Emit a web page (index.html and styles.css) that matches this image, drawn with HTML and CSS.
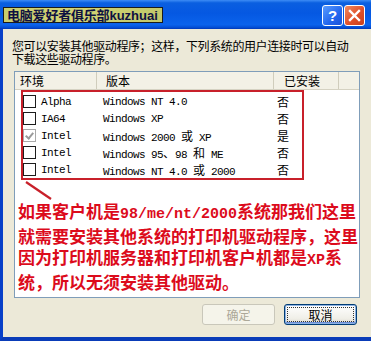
FILE: index.html
```html
<!DOCTYPE html>
<html lang="zh-CN">
<head>
    <meta charset="UTF-8">
    <title>其他驱动程序</title>
    <link rel="stylesheet" href="styles.css">
</head>
<body>
    <div class="window">
        <div class="titlebar">
            <div class="caption">电脑爱好者俱乐部<span class="latin">kuzhuai</span></div>
            <div class="tbtns">
                <div class="tbtn help">?</div>
                <div class="tbtn close">
                    <svg width="13" height="13" viewBox="0 0 13 13"><path d="M2 2 L11 11 M11 2 L2 11" stroke="#fff" stroke-width="2.4" stroke-linecap="square"/></svg>
                </div>
            </div>
        </div>

        <div class="frame">
            <p class="intro">您可以安装其他驱动程序；这样，下列系统的用户连接时可以自动<br>下载这些驱动程序。</p>

            <div class="listbox">
                <div class="head">
                    <div class="hcol c1">环境</div>
                    <div class="hcol c2">版本</div>
                    <div class="hcol c3">已安装</div>
                    <div class="hcol"></div>
                </div>
                <div class="rows">
                    <div class="row"><span class="check"></span><span>Alpha</span><span>Windows NT 4.0</span><span class="cj">否</span></div>
                    <div class="row"><span class="check"></span><span>IA64</span><span>Windows XP</span><span class="cj">否</span></div>
                    <div class="row"><span class="check on"></span><span>Intel</span><span>Windows 2000 <span class="cj">或</span> XP</span><span class="cj">是</span></div>
                    <div class="row"><span class="check"></span><span>Intel</span><span>Windows 95<span class="cj">、</span>98 <span class="cj">和</span> ME</span><span class="cj">否</span></div>
                    <div class="row"><span class="check"></span><span>Intel</span><span>Windows NT 4.0 <span class="cj">或</span> 2000</span><span class="cj">否</span></div>
                </div>
                <div class="note">如果客户机是<span class="mono">98/me/nt/2000</span>系统那我们这里<br>就需要安装其他系统的打印机驱动程序，这里<br>因为打印机服务器和打印机客户机都是<span class="mono">XP</span>系<br>统，所以无须安装其他驱动。</div>

                <div class="mark"></div>
                <svg class="arrow" width="30" height="20" viewBox="0 0 30 20"><path d="M2 1 L27 18" stroke="#c8202a" stroke-width="2.2"/></svg>
            </div>

            <div class="buttons">
                <button class="btn" disabled>确定</button>
                <button class="btn default"><span>取消</span></button>
            </div>
        </div>
    </div>
</body>
</html>
```

FILE: styles.css
```css
* {
    box-sizing: border-box;
}

body {
    margin: 0;
    width: 371px;
    height: 341px;
    overflow: hidden;
    font-family: "Noto Sans CJK SC", "Liberation Sans", sans-serif;
    font-size: 12px;
    color: #000;
    background: #0a3fc4;
}

.window {
    height: 341px;
    display: flex;
    flex-direction: column;
}

.titlebar {
    height: 29px;
    flex: none;
    display: flex;
    align-items: flex-start;
    justify-content: space-between;
    padding: 7px 6px 0 3px;
    background: linear-gradient(to bottom, #3d8cf5 0%, #0a5fe0 10%, #0558e2 45%, #0b63ec 85%, #0450d6 94%, #0038b8 100%);
}

.caption {
    height: 16px;
    padding: 0 4px 0 3px;
    border: 1px solid #1b1b1b;
    background: linear-gradient(to right, #c9cd6c, #d3d476 40%, #c2c86a);
    color: #0e1040;
    font-weight: bold;
    font-size: 13px;
    line-height: 14px;
    letter-spacing: -0.2px;
}

.caption .latin {
    font-family: "Liberation Sans", sans-serif;
    letter-spacing: 0;
}

.tbtns {
    display: flex;
    gap: 1px;
    margin-top: -2px;
}

.tbtn {
    width: 21px;
    height: 21px;
    border: 1px solid #fff;
    border-radius: 3px;
    display: flex;
    align-items: center;
    justify-content: center;
    color: #fff;
    font-family: "Liberation Sans", sans-serif;
    font-weight: bold;
    font-size: 15px;
}

.help {
    background: linear-gradient(135deg, #5a9cff, #2266ee 60%, #1a52d8);
}

.close {
    background: linear-gradient(135deg, #f08a60, #e0502a 55%, #c8401c);
}

.frame {
    flex: 1;
    background: #ece9d8;
    border-left: 3px solid #0840c8;
    border-bottom: 4px solid #0a3cb8;
    padding: 10px 14px 0 9px;
}

.intro {
    margin: 0 0 6px;
    line-height: 13px;
    letter-spacing: -0.4px;
}

.listbox {
    position: relative;
    margin-left: 2px;
    width: 346px;
    height: 227px;
    background: #fff;
    border: 1px solid #7f9db9;
}

.head {
    display: grid;
    grid-template-columns: 82px 177px 65px 1fr;
    height: 18px;
    background: #f3f1e6;
    border-bottom: 1px solid #d5d2c2;
}

.hcol {
    line-height: 17px;
    border-right: 1px solid #d0cdbc;
}

.hcol:last-child {
    border-right: 0;
}

.c1 { padding-left: 5px; }
.c2 { padding-left: 9px; }
.c3 { padding-left: 10px; }

.rows {
    padding-top: 3px;
}

.row {
    display: grid;
    grid-template-columns: 13px 62px 179px 1fr;
    align-items: center;
    height: 17px;
    padding-left: 8px;
    font-family: "Liberation Mono", monospace;
    font-size: 11px;
    letter-spacing: -0.6px;
}

.row > span:nth-child(2),
.row > span:nth-child(3) {
    margin-left: 5px;
}

.cj {
    font-family: "Noto Sans CJK SC", sans-serif;
    font-size: 12px;
    letter-spacing: 0;
}

.check {
    width: 13px;
    height: 13px;
    border: 1px solid #1c1c1c;
    background: #fff;
    position: relative;
}

.check.on {
    border-color: #a9a9a9;
}

.check.on::after {
    content: "";
    position: absolute;
    left: 3px;
    top: 1px;
    width: 3px;
    height: 6px;
    border: solid #9a9a9a;
    border-width: 0 2px 2px 0;
    transform: rotate(40deg);
}

.note {
    margin-top: 22px;
    padding-left: 3px;
    color: #dc0b1c;
    font-weight: bold;
    font-size: 17px;
    line-height: 21px;
    white-space: nowrap;
}

.note .mono {
    font-family: "Liberation Mono", monospace;
    font-size: 15px;
}

.mark {
    position: absolute;
    left: 6px;
    top: 18px;
    width: 283px;
    height: 90px;
    border: 2px solid #c8202a;
}

.arrow {
    position: absolute;
    left: 9px;
    top: 109px;
}

.buttons {
    display: flex;
    justify-content: flex-end;
    gap: 9px;
    margin-top: 6px;
}

.btn {
    width: 73px;
    height: 21px;
    padding: 0;
    border-radius: 3px;
    font-family: "Noto Sans CJK SC", sans-serif;
    font-size: 12px;
    background: linear-gradient(to bottom, #fff, #f0efe8 70%, #dcdad0);
}

.btn[disabled] {
    border: 1px solid #c9c7ba;
    color: #aca899;
    background: #f5f4ea;
}

.btn.default {
    border: 1px solid #003c74;
    color: #000;
    box-shadow: inset 0 0 0 1px #8db2e3, inset 0 -1px 0 1px #6c8fd8;
}

.btn.default span {
    display: block;
    margin: 2px;
    line-height: 13px;
    border: 1px dotted #333;
}
```
